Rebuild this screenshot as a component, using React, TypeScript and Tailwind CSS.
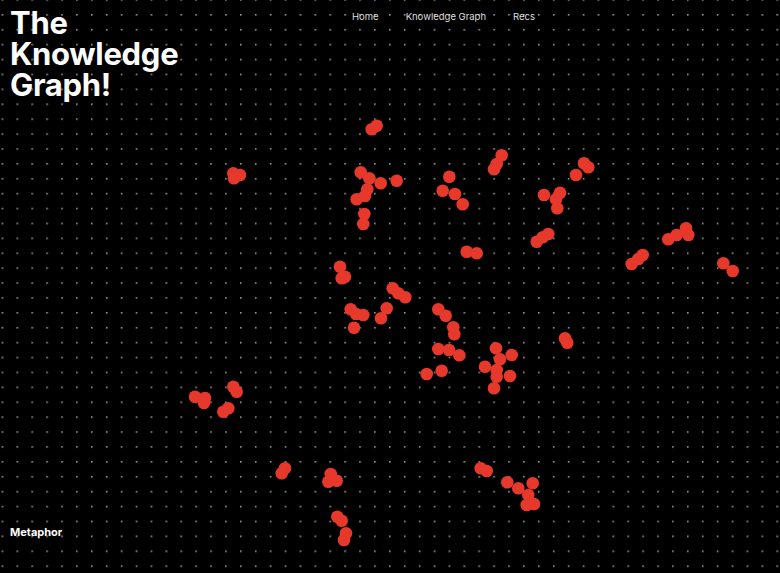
import React from 'react';

// node positions on the graph canvas (px, page coords)
const nodes: [number, number][] = [
  [371.7, 129.3], [376.7, 125.7],
  [233.3, 173.3], [240, 175], [234, 178.3],
  [360.7, 172.3], [369.3, 178.3], [380.7, 183.3], [396.7, 180.7], [367.3, 189.3],
  [365, 196], [356.7, 199.3], [364.3, 214], [363.3, 224],
  [449.3, 176.7], [442.7, 190.7], [455, 194], [462.7, 204.3],
  [501.7, 155.3], [494, 169.3], [496.7, 164],
  [584, 163.3], [588.3, 167.3], [576, 175],
  [544, 195], [560, 192.7], [556, 199.3], [557.3, 208.3],
  [536.7, 241.7], [542.7, 237.3], [548.3, 234],
  [668.3, 239.3], [676.7, 235], [686, 228.3], [688.3, 235],
  [631.7, 264], [638.3, 259], [642.7, 255],
  [723.3, 263.3], [732.7, 271],
  [466.7, 251.7], [476.7, 253.3],
  [340, 266.7], [341.7, 278.3], [345, 276.7],
  [392.7, 288.3], [398.3, 293.3], [405.3, 297.3],
  [350.7, 309.3], [356, 314], [363.3, 315], [354, 327.7],
  [386.7, 308.3], [381, 318.3],
  [438.3, 309.3], [445.7, 315.7], [453.3, 327.3], [454.3, 334.3],
  [438.3, 349], [449, 350], [459.3, 355.3],
  [426.7, 374], [441.7, 370.7],
  [496, 348.3], [500, 359.3], [511.7, 355], [485, 366.7], [496.7, 370],
  [496.7, 376.7], [510, 376], [494, 388.3],
  [565, 338.3], [567.3, 342.7],
  [195, 396.7], [205, 398], [204, 403],
  [233.3, 386.7], [236.7, 391.7],
  [223.3, 411.7], [228.3, 408.3],
  [281.7, 473.3], [285, 468.3],
  [328.3, 481.7], [330.7, 474], [336.7, 480.7],
  [337.3, 516.7], [341.7, 520.7],
  [346, 533.3], [344, 540],
  [480.7, 468.3], [486.7, 471],
  [507.3, 482.3], [518.3, 488.3], [532.7, 483.3], [528.3, 495], [526.7, 505], [534, 504],
];

function GraphCanvas() {
  return (
    <svg className="absolute inset-0 h-full w-full" xmlns="http://www.w3.org/2000/svg">
      <defs>
        <pattern id="dots" x="1.6" y="14" width="14.9" height="14.9" patternUnits="userSpaceOnUse">
          <circle cx="0.85" cy="0.85" r="0.85" fill="#b5b5b5" />
        </pattern>
      </defs>
      <rect width="100%" height="100%" fill="url(#dots)" />
      <g fill="#e6392b">
        {nodes.map(([x, y], i) => (
          <circle key={i} cx={x} cy={y} r={6.3} />
        ))}
      </g>
    </svg>
  );
}

export default function App() {
  return (
    <div className="relative h-[573px] w-full overflow-hidden bg-black font-['Inter',sans-serif]">
      <GraphCanvas />
      <div className="relative flex h-full flex-col justify-between px-[10px] pt-[7px] pb-[33px]">
        <div className="flex items-start">
          <h1 className="w-[342px] shrink-0 text-[31px] font-bold leading-[31px] tracking-[-0.3px] text-white">
            The
            <br />
            Knowledge
            <br />
            Graph!
          </h1>
          <nav className="mt-[3px] flex gap-[27px] text-[9.5px] text-[#dedede]">
            <a href="#">Home</a>
            <a href="#">Knowledge Graph</a>
            <a href="#">Recs</a>
          </nav>
        </div>
        <div className="text-[11px] font-bold text-white">Metaphor</div>
      </div>
    </div>
  );
}
